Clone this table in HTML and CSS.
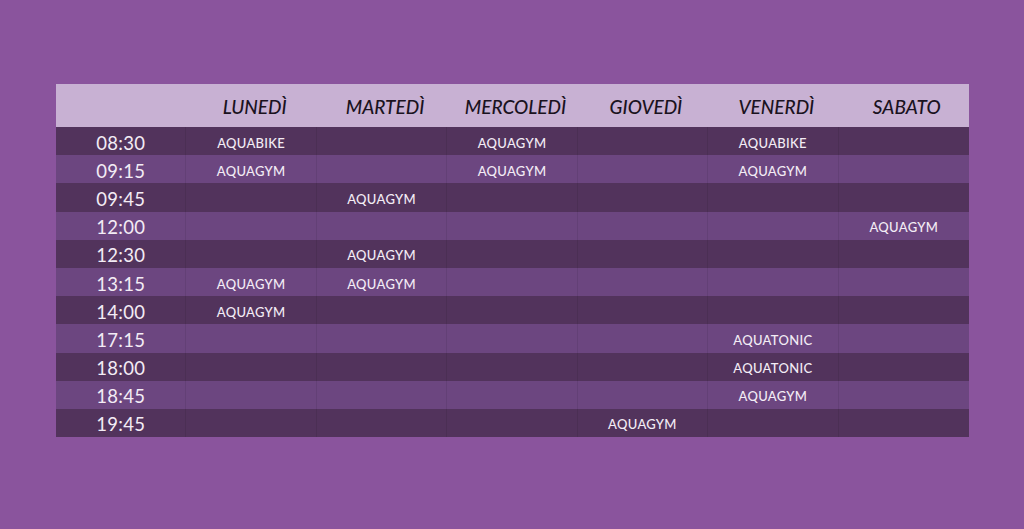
FILE: index.html
```html
<!DOCTYPE html>
<html lang="it">
<head>
<meta charset="utf-8">
<title>Orari</title>
<link rel="stylesheet" href="styles.css">
</head>
<body>
<div class="schedule">
  <div class="head">
    <div class="hcell"></div>
    <div class="hcell">LUNEDÌ</div>
    <div class="hcell">MARTEDÌ</div>
    <div class="hcell">MERCOLEDÌ</div>
    <div class="hcell">GIOVEDÌ</div>
    <div class="hcell">VENERDÌ</div>
    <div class="hcell">SABATO</div>
  </div>
  <div class="row dark"><div class="time">08:30</div><div class="cell">AQUABIKE</div><div class="cell"></div><div class="cell">AQUAGYM</div><div class="cell"></div><div class="cell">AQUABIKE</div><div class="cell"></div></div>
  <div class="row light"><div class="time">09:15</div><div class="cell">AQUAGYM</div><div class="cell"></div><div class="cell">AQUAGYM</div><div class="cell"></div><div class="cell">AQUAGYM</div><div class="cell"></div></div>
  <div class="row dark"><div class="time">09:45</div><div class="cell"></div><div class="cell">AQUAGYM</div><div class="cell"></div><div class="cell"></div><div class="cell"></div><div class="cell"></div></div>
  <div class="row light"><div class="time">12:00</div><div class="cell"></div><div class="cell"></div><div class="cell"></div><div class="cell"></div><div class="cell"></div><div class="cell">AQUAGYM</div></div>
  <div class="row dark"><div class="time">12:30</div><div class="cell"></div><div class="cell">AQUAGYM</div><div class="cell"></div><div class="cell"></div><div class="cell"></div><div class="cell"></div></div>
  <div class="row light"><div class="time">13:15</div><div class="cell">AQUAGYM</div><div class="cell">AQUAGYM</div><div class="cell"></div><div class="cell"></div><div class="cell"></div><div class="cell"></div></div>
  <div class="row dark"><div class="time">14:00</div><div class="cell">AQUAGYM</div><div class="cell"></div><div class="cell"></div><div class="cell"></div><div class="cell"></div><div class="cell"></div></div>
  <div class="row light"><div class="time">17:15</div><div class="cell"></div><div class="cell"></div><div class="cell"></div><div class="cell"></div><div class="cell">AQUATONIC</div><div class="cell"></div></div>
  <div class="row dark"><div class="time">18:00</div><div class="cell"></div><div class="cell"></div><div class="cell"></div><div class="cell"></div><div class="cell">AQUATONIC</div><div class="cell"></div></div>
  <div class="row light"><div class="time">18:45</div><div class="cell"></div><div class="cell"></div><div class="cell"></div><div class="cell"></div><div class="cell">AQUAGYM</div><div class="cell"></div></div>
  <div class="row dark"><div class="time">19:45</div><div class="cell"></div><div class="cell"></div><div class="cell"></div><div class="cell">AQUAGYM</div><div class="cell"></div><div class="cell"></div></div>
</div>
</body>
</html>
```
FILE: styles.css
```css
html, body {
  margin: 0;
  padding: 0;
}
body {
  background: #8a549d;
  width: 1024px;
  height: 529px;
  overflow: hidden;
  font-family: "Lato", "DejaVu Sans", sans-serif;
  padding: 84px 0 0 56px;
  box-sizing: border-box;
}
.schedule {
  width: 913px;
  display: flex;
  flex-direction: column;
}
.head, .row {
  display: grid;
  grid-template-columns: repeat(7, 1fr);
}
.head {
  background: #c8b1d3;
  height: 43px;
}
.hcell {
  display: flex;
  align-items: center;
  justify-content: center;
  font-style: italic;
  font-weight: 500;
  font-size: 19px;
  color: #1a1220;
  padding-top: 2px;
  padding-left: 6px;
}
.row {
  height: 28.2px;
}
.row.dark { background: #52335c; }
.row.light { background: #6c4680; }
.row.dark:first-of-type { box-shadow: 0 1px 2px rgba(0,0,0,0.25); }
.time, .cell {
  display: flex;
  align-items: center;
  justify-content: center;
  color: #f3ecf5;
  border-right: 1px solid rgba(0, 0, 0, 0.08);
  padding-top: 3px;
}
.time {
  font-size: 18.5px;
  letter-spacing: 0.3px;
}
.cell {
  font-size: 13px;
  font-weight: 500;
  letter-spacing: 0.3px;
}
.cell:last-child { border-right: none; }
```
